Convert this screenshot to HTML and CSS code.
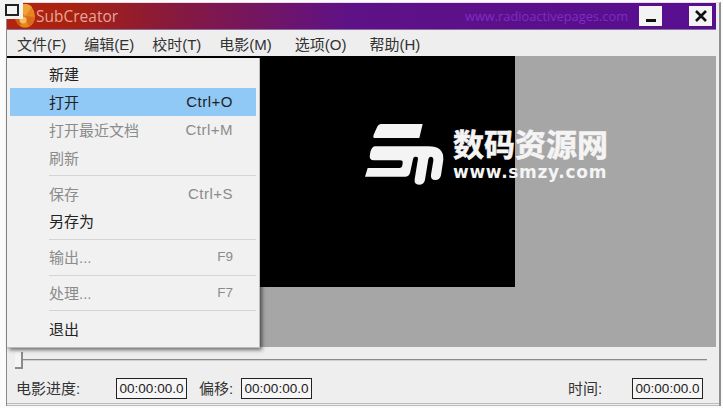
FILE: index.html
```html
<!DOCTYPE html>
<html lang="zh-CN">

<head>
    <meta charset="UTF-8" />
    <title>SubCreator</title>
    <link rel="stylesheet" href="styles.css">
</head>

<body>
    <div class="window">
        <div class="titlebar">
            <svg class="app-icon" width="22" height="24" viewBox="0 0 22 24">
                <ellipse cx="11" cy="12" rx="10" ry="11.5" fill="#e8861e" />
                <path d="M11 12 L4 2 A11 12 0 0 1 18 3 Z" fill="#f0a23a" />
                <path d="M11 12 L21 13 A11 12 0 0 1 15 23 Z" fill="#dc6a1a" />
                <path d="M11 12 L6 22 A11 12 0 0 1 1 11 Z" fill="#cf5a14" />
                <circle cx="9" cy="16" r="3.5" fill="#f4bd62" />
            </svg>
            <span class="app-name">SubCreator</span>
            <span class="app-url">www.radioactivepages.com</span>
            <div class="win-btn"><span class="min-mark"></span></div>
            <div class="win-btn close">
                <svg width="14" height="14" viewBox="0 0 14 14">
                    <path d="M2 2 L12 12 M12 2 L2 12" stroke="#111" stroke-width="2.6" />
                </svg>
            </div>
        </div>

        <div class="menubar">
            <span class="menu-title open">文件(F)</span>
            <span class="menu-title">编辑(E)</span>
            <span class="menu-title">校时(T)</span>
            <span class="menu-title wide">电影(M)</span>
            <span class="menu-title wide">选项(O)</span>
            <span class="menu-title">帮助(H)</span>
        </div>

        <div class="stage">
            <div class="video"></div>
            <div class="watermark">
                <svg width="90" height="72" viewBox="0 0 270 216">
                    <path d="M65 18 H188 L178 60 H42 Q38 58 41 50 L50 30 Q54 18 65 18 Z" fill="#f4f4f4" />
                    <path d="M45 85 H205 Q252 85 250 125 L243 172 Q240 186 226 186 Q211 186 213 170 L220 128 Q221 116 212 116 Q206 116 205 124 L195 185 Q192 200 177 200 Q162 200 164 184 L174 122 Q175 116 168 116 L165 116 Q160 116 159 124 L150 165 Q147 176 135 176 H15 L23 150 H118 Q126 150 127 142 L128 134 Q129 127 120 127 H42 Q26 127 30 108 Q34 85 45 85 Z" fill="#f4f4f4" />
                </svg>
                <div class="mark-text">
                    <div class="mark-cn">数码资源网</div>
                    <div class="mark-url">www.smzy.com</div>
                </div>
            </div>
        </div>

        <div class="slider">
            <div class="slider-track"></div>
            <div class="slider-thumb"></div>
        </div>

        <div class="statusbar">
            <span class="status-label progress">电影进度:</span>
            <span class="timebox">00:00:00.0</span>
            <span class="status-label offset">偏移:</span>
            <span class="timebox">00:00:00.0</span>
            <span class="status-label time">时间:</span>
            <span class="timebox">00:00:00.0</span>
        </div>
    </div>

    <div class="corner-box"><span></span></div>

    <div class="menu">
        <div class="menu-item"><span>新建</span></div>
        <div class="menu-item active"><span>打开</span><span class="keys">Ctrl+O</span></div>
        <div class="menu-item off"><span>打开最近文档</span><span class="keys">Ctrl+M</span></div>
        <div class="menu-item off"><span>刷新</span></div>
        <div class="menu-sep"></div>
        <div class="menu-item off"><span>保存</span><span class="keys">Ctrl+S</span></div>
        <div class="menu-item"><span>另存为</span></div>
        <div class="menu-sep"></div>
        <div class="menu-item off"><span>输出...</span><span class="keys fkey">F9</span></div>
        <div class="menu-sep"></div>
        <div class="menu-item off"><span>处理...</span><span class="keys fkey">F7</span></div>
        <div class="menu-sep"></div>
        <div class="menu-item"><span>退出</span></div>
    </div>
</body>

</html>
```

FILE: styles.css
```css
* {
    box-sizing: border-box;
}

html,
body {
    height: 100%;
}

body {
    margin: 0;
    background-color: #fbfbfb;
    overflow: hidden;
    font-family: "Liberation Sans", "Noto Sans CJK SC", sans-serif;
    color: #222;
}

.window {
    width: 715px;
    height: 404px;
    margin: 2px 0 0 6px;
    background-color: #eeeeee;
    border-left: 1px solid #8a8a8a;
    border-right: 2px solid #8f8f8f;
    border-top: 1px solid #e8d8e8;
    display: flex;
    flex-direction: column;
}

.titlebar {
    height: 27px;
    flex: none;
    margin-right: 3px;
    display: flex;
    align-items: center;
    padding-right: 4px;
    background: linear-gradient(to right, #b4230f 0, #a8220f 9%, #86193f 24%, #5f1186 48%, #560f90 100%);
    border-bottom: 1px solid #8a6ea0;
}

.app-icon {
    margin-left: 7px;
    flex: none;
}

.app-name {
    font-family: "Open Sans", sans-serif;
    font-size: 15.5px;
    color: #e6a59c;
}

.app-url {
    margin-left: auto;
    margin-right: 11px;
    font-family: "Open Sans", sans-serif;
    font-size: 12.8px;
    color: #7f2cc6;
}

.win-btn {
    width: 23px;
    height: 20px;
    background-color: #f4f4f4;
    display: flex;
    align-items: center;
    justify-content: center;
}

.win-btn.close {
    margin-left: 27px;
}

.min-mark {
    width: 10px;
    height: 3px;
    margin-top: 9px;
    background-color: #111;
}

.menubar {
    height: 26px;
    flex: none;
    display: flex;
    align-items: center;
    padding-left: 10px;
    gap: 18px;
    font-size: 15px;
    background-color: #eeeeee;
}

.menu-title {
    white-space: nowrap;
    color: #333;
}

.menu-title.wide {
    margin-right: 5px;
}

.stage {
    height: 291px;
    flex: none;
    margin-right: 3px;
    background-color: #a6a6a6;
    display: flex;
    position: relative;
}

.video {
    width: 508px;
    height: 231px;
    background-color: #000;
}

.watermark {
    position: absolute;
    left: 353px;
    top: 62px;
    display: flex;
    align-items: flex-start;
    gap: 3px;
    color: #f4f4f4;
}

.mark-text {
    margin-top: 12px;
}

.mark-cn {
    font-size: 31px;
    font-weight: 700;
    line-height: 32px;
    white-space: nowrap;
    -webkit-text-stroke: 0.6px #f4f4f4;
}

.mark-url {
    font-family: "DejaVu Sans", sans-serif;
    font-size: 17px;
    font-weight: 700;
    line-height: 20px;
    letter-spacing: 0.7px;
    white-space: nowrap;
}

.slider {
    height: 28px;
    flex: none;
    position: relative;
    padding: 12px 12px 0 15px;
}

.slider-track {
    height: 2px;
    background-color: #8a8a8a;
    border-bottom: 1px solid #cfcfcf;
}

.slider-thumb {
    position: absolute;
    left: 8px;
    top: 5px;
    width: 8px;
    height: 17px;
    border-right: 2px solid #8a8a8a;
    border-bottom: 2px solid #8a8a8a;
    background-color: #f4f4f4;
}

.statusbar {
    flex: 1;
    display: flex;
    align-items: center;
    padding: 0 16px 2px 9px;
    font-size: 15px;
    border-bottom: 3px double #bbb;
}

.status-label {
    color: #333;
    white-space: nowrap;
    margin-top: -2px;
}

.status-label.progress {
    width: 100px;
}

.status-label.offset {
    margin-left: 12px;
    width: 42px;
}

.status-label.time {
    margin-left: auto;
    width: 64px;
}

.timebox {
    width: 71px;
    height: 21px;
    border: 1px solid #222;
    background-color: #f6f6f6;
    font-size: 13.5px;
    line-height: 19px;
    text-align: center;
    white-space: nowrap;
}

.corner-box {
    position: absolute;
    left: 0;
    top: 0;
    width: 23px;
    height: 19px;
    background-color: #f2f2f2;
    display: flex;
    align-items: center;
    justify-content: center;
}

.corner-box span {
    width: 14px;
    height: 12px;
    border: 2px solid #222;
    background-color: #f4f4f4;
}

.menu {
    position: absolute;
    left: 7px;
    top: 58px;
    width: 253px;
    height: 290px;
    padding: 2px 3px;
    background-color: #f1f1f1;
    border-right: 1px solid #bcbcbc;
    border-bottom: 1px solid #bcbcbc;
    box-shadow: 2px 2px 4px rgba(0, 0, 0, 0.55);
    font-size: 15px;
}

.menu-item {
    height: 27.8px;
    display: flex;
    align-items: center;
    justify-content: space-between;
    padding: 0 23px 0 39px;
    color: #222;
}

.menu-item.active {
    background-color: #90c8f6;
}

.menu-item.off {
    color: #8b8b8b;
}

.keys {
    font-size: 15px;
    letter-spacing: 0.5px;
}

.keys.fkey {
    font-size: 13.5px;
    letter-spacing: 0;
}

.menu-sep {
    height: 1px;
    margin: 4px 0 3px 39px;
    background-color: #d4d4d4;
}
```
